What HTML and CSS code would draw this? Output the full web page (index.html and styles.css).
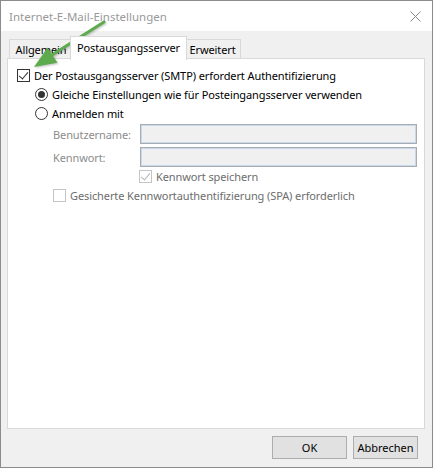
FILE: index.html
```html
<!DOCTYPE html>
<html lang="de">
<head>
    <meta charset="UTF-8">
    <title>Internet-E-Mail-Einstellungen</title>
    <link rel="stylesheet" href="styles.css">
</head>
<body>
    <div class="window">
        <div class="titlebar">
            <span class="title">Internet-E-Mail-Einstellungen</span>
            <span class="close">
                <svg width="11" height="11" viewBox="0 0 11 11"><path d="M0.5 0.5L10.5 10.5M10.5 0.5L0.5 10.5" stroke="#8a8a8a" stroke-width="1"/></svg>
            </span>
        </div>

        <div class="content">
            <div class="tabs">
                <div class="tab tab-first">Allgemein</div>
                <div class="tab active">Postausgangsserver</div>
                <div class="tab tab-last">Erweitert</div>
            </div>

            <div class="panel">
                <label class="row row-main">
                    <span class="check checked"></span>
                    Der Postausgangsserver (SMTP) erfordert Authentifizierung
                </label>
                <label class="row row-radio">
                    <span class="radio selected"></span>
                    Gleiche Einstellungen wie für Posteingangsserver verwenden
                </label>
                <label class="row row-radio">
                    <span class="radio"></span>
                    Anmelden mit
                </label>

                <div class="field field-first">
                    <span class="field-label">Benutzername:</span>
                    <span class="input"></span>
                </div>
                <div class="field">
                    <span class="field-label">Kennwort:</span>
                    <span class="input"></span>
                </div>

                <label class="row row-save disabled">
                    <span class="check checked"></span>
                    Kennwort speichern
                </label>
                <label class="row row-spa disabled">
                    <span class="check"></span>
                    Gesicherte Kennwortauthentifizierung (SPA) erforderlich
                </label>
            </div>

            <div class="footer">
                <button class="btn btn-ok">OK</button>
                <button class="btn btn-cancel">Abbrechen</button>
            </div>
        </div>

        <!-- Pfeil aus dem Screenshot -->
        <svg class="arrow" width="433" height="468" viewBox="0 0 433 468">
            <line x1="104" y1="22" x2="52" y2="55" stroke="#5dab4c" stroke-width="3" stroke-linecap="round"/>
            <polygon points="34,67 57.4,62.7 47.6,47.5" fill="#5dab4c"/>
        </svg>
    </div>
</body>
</html>
```

FILE: styles.css
```css
body {
    margin: 0;
    font-family: "Noto Sans", "Open Sans", sans-serif;
    font-size: 11px;
    letter-spacing: -0.1px;
    color: #000000;
}

.window {
    position: relative;
    width: 433px;
    height: 468px;
    box-sizing: border-box;
    border: 1px solid #8c8c8c;
    background-color: #f0f0f0;
    display: flex;
    flex-direction: column;
}

.titlebar {
    height: 30px;
    background-color: #ffffff;
    display: flex;
    align-items: center;
    justify-content: space-between;
    padding-left: 8px;
}

.title {
    font-size: 11.5px;
    letter-spacing: 0;
    color: #999999;
}

.close {
    width: 34px;
    height: 30px;
    display: flex;
    align-items: center;
    justify-content: center;
}

.content {
    flex: 1;
    padding: 5px 7px 0 6px;
    display: flex;
    flex-direction: column;
}

.tabs {
    display: flex;
    align-items: flex-start;
    height: 22px;
    padding-left: 2px;
}

.tab {
    height: 19px;
    margin-top: 3px;
    box-sizing: border-box;
    border: 1px solid #d9d9d9;
    border-bottom: none;
    background-color: #f0f0f0;
    display: flex;
    align-items: center;
    justify-content: center;
    padding-top: 1px;
}

.tab-first {
    width: 63px;
    border-right: none;
}

.tab-last {
    width: 56px;
    border-left: none;
}

.tab.active {
    position: relative;
    z-index: 2;
    width: 117px;
    height: 24px;
    margin: 0 -2px;
    background-color: #ffffff;
    padding-top: 0;
    padding-bottom: 3px;
}

.panel {
    height: 371px;
    box-sizing: border-box;
    border: 1px solid #d9d9d9;
    background-color: #ffffff;
    padding: 8px 0 0 9px;
}

.row {
    display: flex;
    align-items: center;
    gap: 4px;
    height: 16px;
}

.row-radio {
    margin-top: 3px;
    padding-left: 18px;
}

.check {
    width: 13px;
    height: 13px;
    box-sizing: border-box;
    border: 1px solid #333333;
    background-color: #ffffff;
    position: relative;
    flex-shrink: 0;
}

.check.checked::after {
    content: "";
    position: absolute;
    left: 3px;
    top: 0px;
    width: 4px;
    height: 8px;
    border-right: 1px solid #333333;
    border-bottom: 1px solid #333333;
    transform: rotate(40deg);
}

.radio {
    width: 13px;
    height: 13px;
    box-sizing: border-box;
    border: 1px solid #333333;
    border-radius: 50%;
    background-color: #ffffff;
    position: relative;
    flex-shrink: 0;
}

.radio.selected::after {
    content: "";
    position: absolute;
    left: 2px;
    top: 2px;
    width: 7px;
    height: 7px;
    border-radius: 50%;
    background-color: #333333;
}

.field {
    display: flex;
    align-items: center;
    height: 20px;
    margin-top: 3px;
    padding-left: 36px;
}

.field-first {
    margin-top: 3px;
}

.field-label {
    width: 87px;
    color: #8c8c8c;
}

.input {
    width: 277px;
    height: 20px;
    box-sizing: border-box;
    border: 1px solid #a9acaf;
    box-shadow: inset 0 0 0 1px #c7d9ef;
    background-color: #f0f0f0;
}

.row-save {
    margin-top: 1px;
    padding-left: 122px;
}

.row-spa {
    margin-top: 3px;
    padding-left: 36px;
}

.disabled {
    color: #6d6d6d;
}

.disabled .check {
    border-color: #c4c4c4;
}

.disabled .check.checked::after {
    border-color: #b4b4b4;
}

.footer {
    display: flex;
    justify-content: flex-end;
    gap: 6px;
    margin-top: 7px;
    padding-right: 7px;
}

.btn {
    height: 23px;
    border: 1px solid #adadad;
    background-color: #e1e1e1;
    font-family: inherit;
    font-size: 11px;
    color: #000000;
    padding: 0;
}

.btn-ok {
    width: 75px;
}

.btn-cancel {
    width: 65px;
}

.arrow {
    position: absolute;
    left: -1px;
    top: -1px;
    pointer-events: none;
    filter: drop-shadow(1px 1px 1px rgba(0, 0, 0, 0.25));
}
```
